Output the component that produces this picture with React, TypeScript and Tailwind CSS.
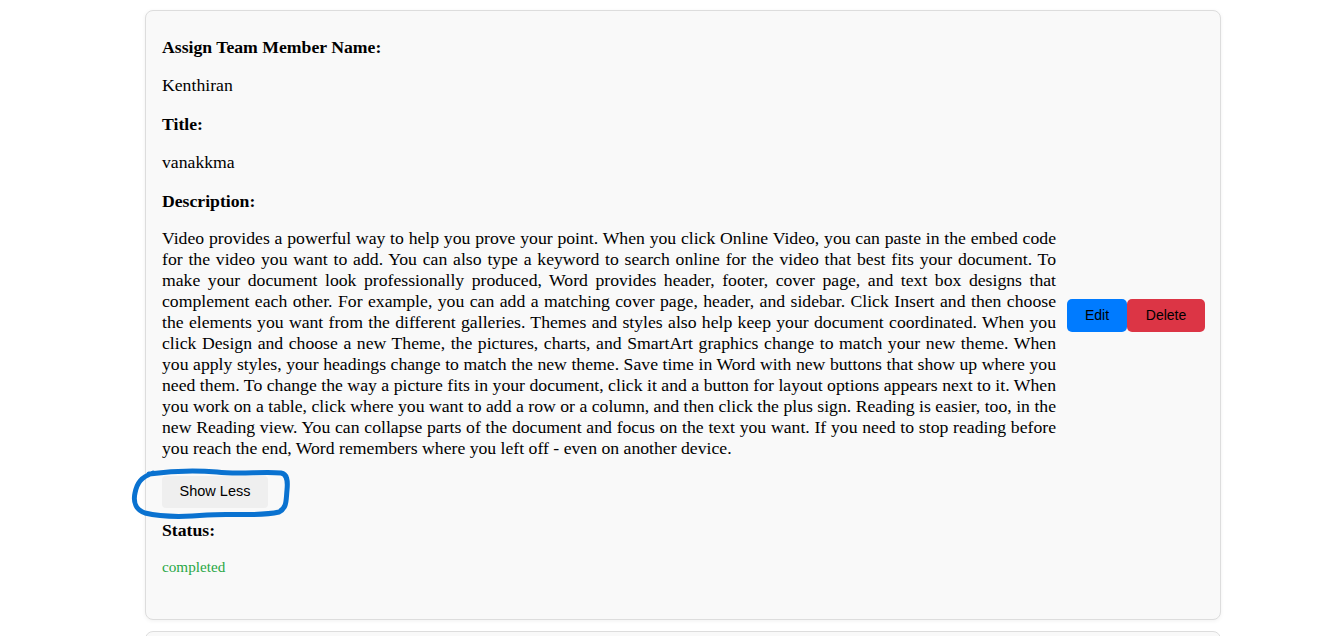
import React from "react";

const description =
  "Video provides a powerful way to help you prove your point. When you click Online Video, you can paste in the embed code for the video you want to add. You can also type a keyword to search online for the video that best fits your document. To make your document look professionally produced, Word provides header, footer, cover page, and text box designs that complement each other. For example, you can add a matching cover page, header, and sidebar. Click Insert and then choose the elements you want from the different galleries. Themes and styles also help keep your document coordinated. When you click Design and choose a new Theme, the pictures, charts, and SmartArt graphics change to match your new theme. When you apply styles, your headings change to match the new theme. Save time in Word with new buttons that show up where you need them. To change the way a picture fits in your document, click it and a button for layout options appears next to it. When you work on a table, click where you want to add a row or a column, and then click the plus sign. Reading is easier, too, in the new Reading view. You can collapse parts of the document and focus on the text you want. If you need to stop reading before you reach the end, Word remembers where you left off - even on another device.";

const serif = "font-['Liberation_Serif','Times_New_Roman',serif]";
const sans = "font-['Liberation_Sans',Arial,sans-serif]";

const TaskCard = () => {
  return (
    <div className="relative ml-[145px] mt-[10px] w-[1076px] rounded-lg border border-[#ddd] bg-[#f9f9f9] shadow-[0_1px_4px_rgba(0,0,0,0.06)] flex items-center gap-[11px] pl-4 pr-[15px]">
      <div className={`w-[894px] pt-[27px] pb-[44px] text-black text-[17.7px] ${serif}`}>
        <p className="font-bold leading-[18.4px]">Assign Team Member Name:</p>
        <p className="mt-[20px] leading-[18.4px]">Kenthiran</p>
        <p className="mt-[20px] font-bold leading-[18.4px]">Title:</p>
        <p className="mt-[20px] leading-[18.4px]">vanakkma</p>
        <p className="mt-[20px] font-bold leading-[18.4px]">Description:</p>
        <p className="mt-[17.7px] leading-[21px] text-justify">{description}</p>
        <button
          className={`mt-[17.5px] h-[32px] w-[106px] rounded bg-[#efefef] text-[14.5px] text-black ${sans}`}
        >
          Show Less
        </button>
        <p className="mt-[12.8px] font-bold leading-[18.4px]">Status:</p>
        <p className="mt-[19.8px] text-[15.2px] leading-4 text-[#28a745]">completed</p>
      </div>
      <div className={`flex ${sans}`}>
        <button className="h-[33px] w-[60px] rounded-[5px] bg-[#007bff] text-sm text-black">
          Edit
        </button>
        <button className="h-[33px] w-[78px] rounded-[5px] bg-[#dc3545] text-sm text-black">
          Delete
        </button>
      </div>
      {/* hand-drawn highlight around the toggle button */}
      <svg
        className="absolute left-[-15px] top-[455px] pointer-events-none"
        width="165"
        height="60"
        viewBox="0 0 165 60"
        fill="none"
      >
        <path
          d="M18 8 C40 5 62 4 86 6 C110 9 130 5 150 7 C156 8 157 14 156 24 C155 34 156 42 148 46 C126 51 100 47 76 49 C54 51 30 51 14 47 C5 44 2 36 4 27 C6 17 10 11 22 7"
          stroke="#0a72d0"
          strokeWidth="5"
          strokeLinecap="round"
          strokeLinejoin="round"
        />
      </svg>
    </div>
  );
};

const App = () => {
  return (
    <div className="min-h-screen bg-white overflow-hidden h-[636px]">
      <TaskCard />
      <div className="ml-[145px] mt-[11px] h-[200px] w-[1076px] rounded-lg border border-[#ddd] bg-[#f9f9f9]" />
    </div>
  );
};

export default App;
